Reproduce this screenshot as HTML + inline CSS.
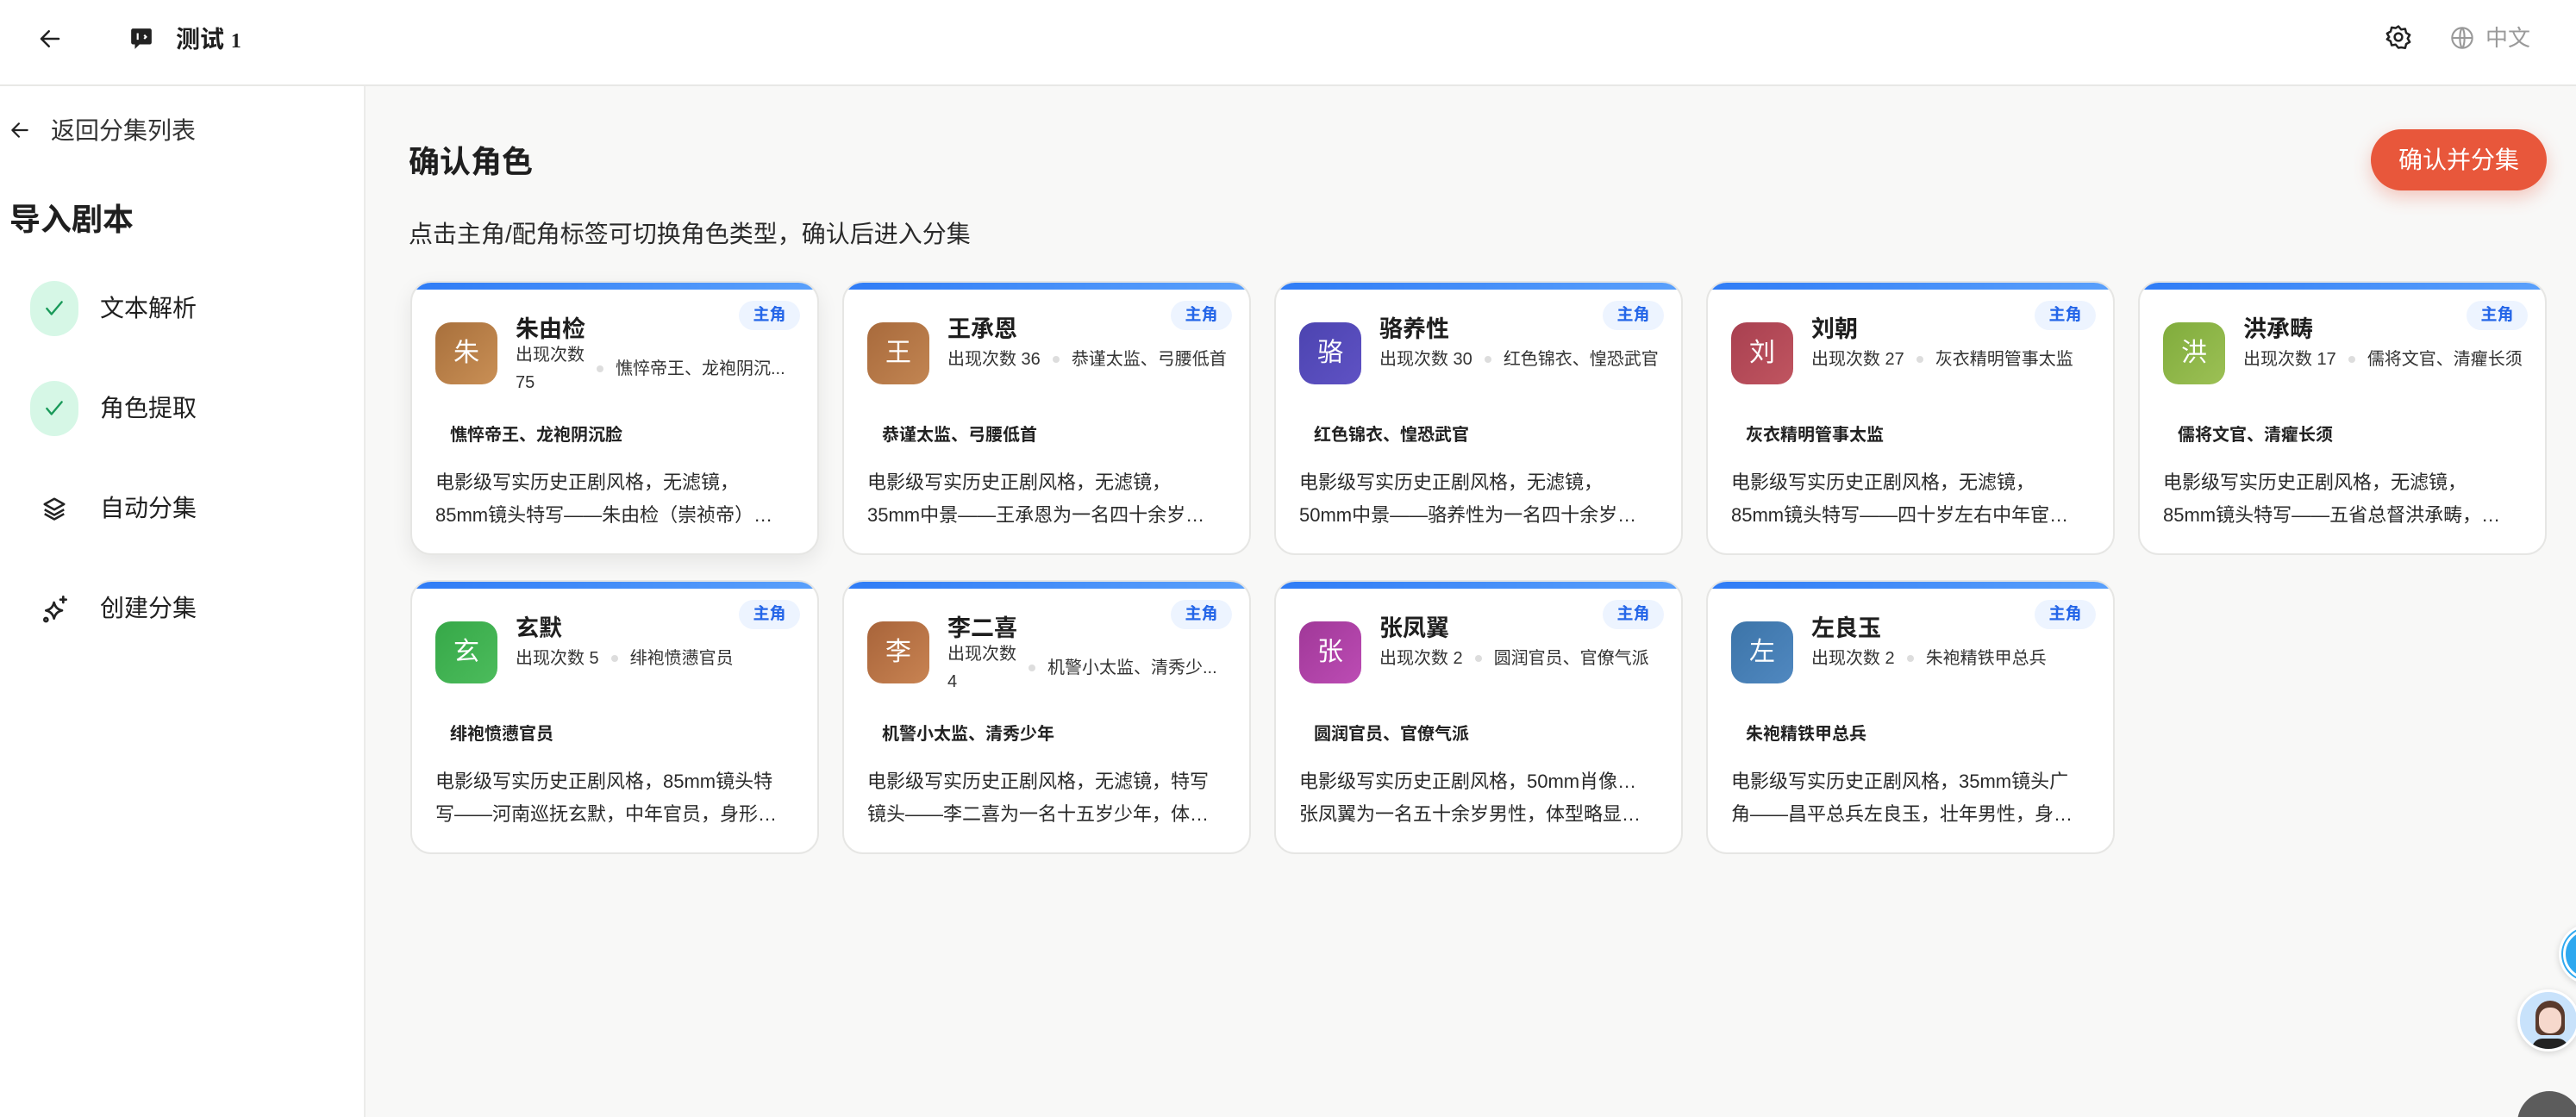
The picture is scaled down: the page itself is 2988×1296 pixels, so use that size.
<!DOCTYPE html>
<html><head><meta charset="utf-8"><style>
*{box-sizing:border-box;margin:0;padding:0}
html,body{width:2988px;height:1296px;overflow:hidden}
body{background:#f8f8f7;font-family:"Liberation Sans","Noto Sans CJK SC",sans-serif;color:#1f1f1f;position:relative}
.hdr{position:absolute;left:0;top:0;width:2988px;height:100px;background:#fff;border-bottom:2px solid #e8e8e6}
.side{position:absolute;left:0;top:100px;width:424px;height:1196px;background:#fff;border-right:2px solid #ececea}
.abs{position:absolute;white-space:nowrap}
.step{position:absolute;left:116px;font-size:28px;line-height:40px;color:#1f1f1f}
.chk{position:absolute;left:35px;width:56px;height:64px;border-radius:28px;background:#d6f7e6}
.card{position:absolute;width:474px;height:318px;background:#fff;border:2px solid #e6e6e4;border-radius:24px;overflow:hidden}
.card::before{content:"";position:absolute;left:0;top:0;right:0;height:8px;background:linear-gradient(90deg,#2f7cf6,#5aa0fb)}
.av{position:absolute;left:27px;top:46px;width:72px;height:72px;border-radius:18px;color:#fff;font-size:30px;line-height:72px;text-align:center}
.nm{position:absolute;left:120px;top:36px;font-size:27px;font-weight:bold;line-height:36px}
.tag{position:absolute;left:379px;top:21px;width:71px;height:34px;border-radius:17px;background:#edf4ff;color:#2566e8;font-size:19px;font-weight:bold;line-height:34px;text-align:center}
.meta{position:absolute;left:120px;top:74px;font-size:20px;line-height:30px;color:#333;display:flex;align-items:center;white-space:nowrap}
.dot{display:inline-block;width:8px;height:8px;border-radius:4px;background:#ddd;margin:0 14px}
.trait{position:absolute;left:44px;top:162px;font-size:20px;font-weight:bold;line-height:30px;color:#222}
.desc{position:absolute;left:27px;top:213px;width:400px;font-size:22px;line-height:38px;color:#2a2a2a}
.desc div{white-space:nowrap;overflow:hidden;text-overflow:ellipsis}
</style></head><body>
<div class="hdr">
<svg class="abs" style="left:43px;top:30px" width="30" height="30" viewBox="0 0 24 24" fill="none" stroke="#222" stroke-width="2" stroke-linecap="round" stroke-linejoin="round"><path d="M20 12H4M11 5l-7 7 7 7"/></svg>
<svg class="abs" style="left:151px;top:31px" width="26" height="28" viewBox="0 0 24 26"><path d="M3 2h18a2 2 0 0 1 2 2v13a2 2 0 0 1-2 2H10l-5 5v-5H3a2 2 0 0 1-2-2V4a2 2 0 0 1 2-2z" fill="#222"/><path d="M8 7v7M15 9l2 2-2 2" stroke="#fff" stroke-width="2" fill="none"/></svg>
<div class="abs" style="left:204px;top:26px;font-size:28px;line-height:40px;font-weight:bold">测试 <span style="font-family:'Liberation Serif',serif;font-size:24px">1</span></div>
<svg class="abs" style="left:2767px;top:28px" width="30" height="30" viewBox="0 0 24 24" fill="none" stroke="#222" stroke-width="2"><path d="M12 2l2.5 3 3.8-.6.9 3.7 3.3 1.9-1.9 3.3 1.9 3.3-3.3 1.9-.9 3.7-3.8-.6L12 22l-2.5-3-3.8.6-.9-3.7-3.3-1.9L3.4 12 1.5 8.7 4.8 6.8l.9-3.7 3.8.6z" stroke-linejoin="round"/><circle cx="12" cy="12" r="3.5"/></svg>
<svg class="abs" style="left:2842px;top:30px" width="28" height="28" viewBox="0 0 24 24" fill="none" stroke="#999" stroke-width="1.8"><circle cx="12" cy="12" r="10"/><path d="M2 12h20M12 2c3 3 3 17 0 20M12 2c-3 3-3 17 0 20"/></svg>
<div class="abs" style="left:2883px;top:24px;font-size:26px;line-height:40px;color:#9a9a9a">中文</div>
</div>
<div class="side">
<svg class="abs" style="left:10px;top:38px" width="26" height="26" viewBox="0 0 24 24" fill="none" stroke="#222" stroke-width="2" stroke-linecap="round" stroke-linejoin="round"><path d="M20 12H4M11 5l-7 7 7 7"/></svg>
<div class="abs" style="left:59px;top:32px;font-size:28px;line-height:40px;color:#333">返回分集列表</div>
<div class="abs" style="left:11px;top:130px;font-size:36px;line-height:50px;font-weight:bold">导入剧本</div>
<div class="chk" style="top:226px"></div><svg class="abs" style="left:50px;top:245px" width="26" height="26" viewBox="0 0 24 24" fill="none" stroke="#1a9a5a" stroke-width="2.2" stroke-linecap="round" stroke-linejoin="round"><path d="M4 12l5 6L20 5"/></svg>
<div class="step" style="top:238px">文本解析</div>
<div class="chk" style="top:342px"></div><svg class="abs" style="left:50px;top:361px" width="26" height="26" viewBox="0 0 24 24" fill="none" stroke="#1a9a5a" stroke-width="2.2" stroke-linecap="round" stroke-linejoin="round"><path d="M4 12l5 6L20 5"/></svg>
<div class="step" style="top:354px">角色提取</div>
<svg class="abs" style="left:48px;top:475px" width="30" height="30" viewBox="0 0 24 24" fill="none" stroke="#222" stroke-width="2" stroke-linejoin="round"><path d="M12 3l9 5-9 5-9-5z"/><path d="M3 13l9 5 9-5M3 17l9 5 9-5"/></svg>
<div class="step" style="top:470px">自动分集</div>
<svg class="abs" style="left:48px;top:591px" width="32" height="32" viewBox="0 0 24 24" fill="none" stroke="#222" stroke-width="2" stroke-linejoin="round" stroke-linecap="round"><path d="M11 6c1 4 3 6 7 7-4 1-6 3-7 7-1-4-3-6-7-7 4-1 6-3 7-7z"/><path d="M19 1v5M16.5 3.5h5"/><circle cx="4" cy="21" r="1.5"/></svg>
<div class="step" style="top:586px">创建分集</div>
</div>
<div class="abs" style="left:474px;top:163px;font-size:36px;line-height:50px;font-weight:bold">确认角色</div>
<div class="abs" style="left:474px;top:252px;font-size:28px;line-height:40px;color:#2a2a2a">点击主角/配角标签可切换角色类型，确认后进入分集</div>
<div class="abs" style="left:2750px;top:150px;width:204px;height:71px;border-radius:36px;background:#e8573b;color:#fff;font-size:28px;line-height:71px;text-align:center;box-shadow:0 8px 20px rgba(232,87,59,.3)">确认并分集</div>

<div class="card" style="left:476px;top:326px;box-shadow:0 8px 24px rgba(0,0,0,.08)"><div class="av" style="background:linear-gradient(135deg,#a8703c,#c98f55)">朱</div><div class="nm">朱由检</div><div class="tag">主角</div>
<div class="meta" style="top:68px"><span style="line-height:32px">出现次数<br>75</span><span class="dot"></span>憔悴帝王、龙袍阴沉...</div>
<div class="trait">憔悴帝王、龙袍阴沉脸</div><div class="desc"><div>电影级写实历史正剧风格，无滤镜，</div><div>85mm镜头特写——朱由检（崇祯帝）为一名三十余岁</div></div></div>

<div class="card" style="left:977px;top:326px"><div class="av" style="background:linear-gradient(135deg,#a86a3c,#c28552)">王</div><div class="nm">王承恩</div><div class="tag">主角</div>
<div class="meta">出现次数 36<span class="dot"></span>恭谨太监、弓腰低首</div>
<div class="trait">恭谨太监、弓腰低首</div><div class="desc"><div>电影级写实历史正剧风格，无滤镜，</div><div>35mm中景——王承恩为一名四十余岁中年宦官</div></div></div>

<div class="card" style="left:1478px;top:326px"><div class="av" style="background:linear-gradient(135deg,#4c44b0,#5f52c4)">骆</div><div class="nm">骆养性</div><div class="tag">主角</div>
<div class="meta">出现次数 30<span class="dot"></span>红色锦衣、惶恐武官</div>
<div class="trait">红色锦衣、惶恐武官</div><div class="desc"><div>电影级写实历史正剧风格，无滤镜，</div><div>50mm中景——骆养性为一名四十余岁武官男性</div></div></div>

<div class="card" style="left:1979px;top:326px"><div class="av" style="background:linear-gradient(135deg,#a84050,#c05560)">刘</div><div class="nm">刘朝</div><div class="tag">主角</div>
<div class="meta">出现次数 27<span class="dot"></span>灰衣精明管事太监</div>
<div class="trait">灰衣精明管事太监</div><div class="desc"><div>电影级写实历史正剧风格，无滤镜，</div><div>85mm镜头特写——四十岁左右中年宦官男性</div></div></div>

<div class="card" style="left:2480px;top:326px"><div class="av" style="background:linear-gradient(135deg,#80ac3c,#9cc055)">洪</div><div class="nm">洪承畴</div><div class="tag">主角</div>
<div class="meta">出现次数 17<span class="dot"></span>儒将文官、清癯长须</div>
<div class="trait">儒将文官、清癯长须</div><div class="desc"><div>电影级写实历史正剧风格，无滤镜，</div><div>85mm镜头特写——五省总督洪承畴，中年男性</div></div></div>

<div class="card" style="left:476px;top:673px"><div class="av" style="background:linear-gradient(135deg,#36a848,#4cbc5c)">玄</div><div class="nm">玄默</div><div class="tag">主角</div>
<div class="meta">出现次数 5<span class="dot"></span>绯袍愤懑官员</div>
<div class="trait">绯袍愤懑官员</div><div class="desc"><div>电影级写实历史正剧风格，85mm镜头特</div><div>写——河南巡抚玄默，中年官员，身形稍瘦</div></div></div>

<div class="card" style="left:977px;top:673px"><div class="av" style="background:linear-gradient(135deg,#a8643a,#c88352)">李</div><div class="nm">李二喜</div><div class="tag">主角</div>
<div class="meta" style="top:68px"><span style="line-height:32px">出现次数<br>4</span><span class="dot"></span>机警小太监、清秀少...</div>
<div class="trait">机警小太监、清秀少年</div><div class="desc"><div>电影级写实历史正剧风格，无滤镜，特写</div><div>镜头——李二喜为一名十五岁少年，体态瘦小</div></div></div>

<div class="card" style="left:1478px;top:673px"><div class="av" style="background:linear-gradient(135deg,#a03898,#bc4cb4)">张</div><div class="nm">张凤翼</div><div class="tag">主角</div>
<div class="meta">出现次数 2<span class="dot"></span>圆润官员、官僚气派</div>
<div class="trait">圆润官员、官僚气派</div><div class="desc"><div>电影级写实历史正剧风格，50mm肖像——</div><div>张凤翼为一名五十余岁男性，体型略显发福</div></div></div>

<div class="card" style="left:1979px;top:673px"><div class="av" style="background:linear-gradient(135deg,#3c74a8,#5088c0)">左</div><div class="nm">左良玉</div><div class="tag">主角</div>
<div class="meta">出现次数 2<span class="dot"></span>朱袍精铁甲总兵</div>
<div class="trait">朱袍精铁甲总兵</div><div class="desc"><div>电影级写实历史正剧风格，35mm镜头广</div><div>角——昌平总兵左良玉，壮年男性，身形魁梧</div></div></div>

<div class="abs" style="left:2968px;top:1072px;width:70px;height:70px;border-radius:35px;background:#fff;box-shadow:0 2px 8px rgba(0,0,0,.15)"><div style="margin:5px;width:60px;height:60px;border-radius:30px;background:#2ea8ef;border:3px solid #fff;box-shadow:0 0 0 2px #2ea8ef"></div></div>
<div class="abs" style="left:2920px;top:1148px;width:72px;height:72px;border-radius:36px;background:#c8e2fb;border:3px solid #fff;box-shadow:0 2px 8px rgba(0,0,0,.15);overflow:hidden">
<div style="position:absolute;left:18px;top:10px;width:34px;height:40px;border-radius:17px 17px 8px 8px;background:#5a3a2c"></div>
<div style="position:absolute;left:22px;top:18px;width:26px;height:30px;border-radius:12px;background:#f6d8cc"></div>
<div style="position:absolute;left:14px;top:54px;width:42px;height:20px;border-radius:12px 12px 0 0;background:#222"></div></div>
<div class="abs" style="left:2920px;top:1266px;width:74px;height:74px;border-radius:37px;background:#5c5c5c"></div>
</body></html>
